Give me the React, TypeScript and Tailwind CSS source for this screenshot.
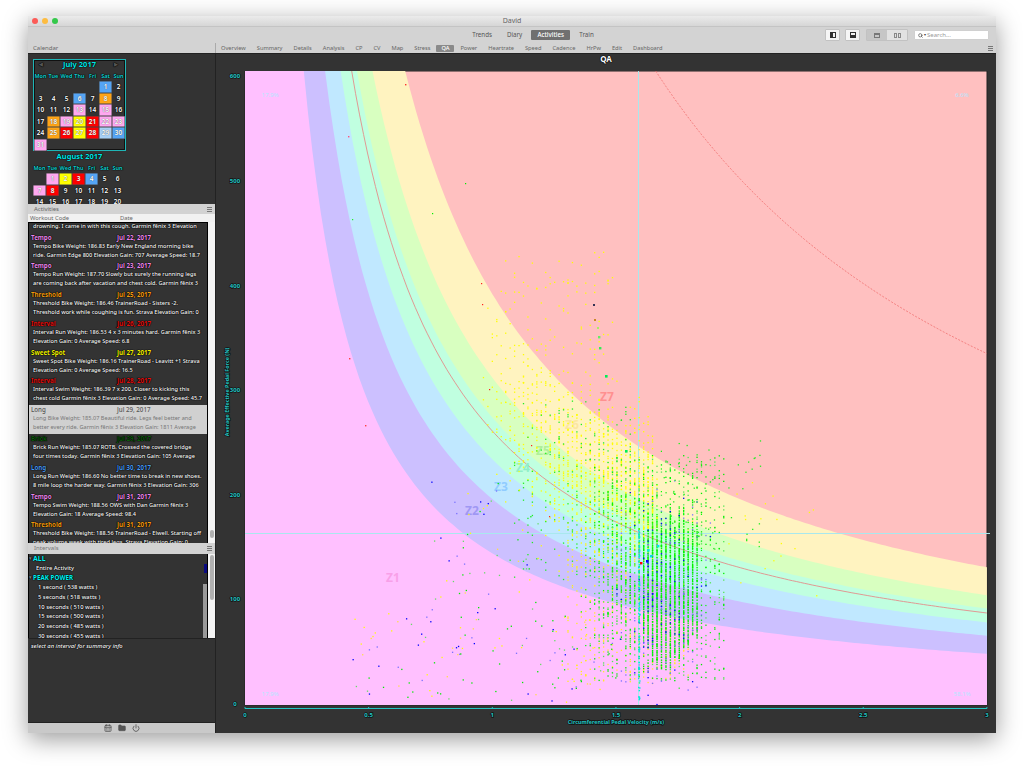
import { CalendarDays, Folder, Power, Search } from "lucide-react";

const halo = "[text-shadow:0_0_1px_#000,0_0_1px_#000,0_0_1px_#000]";
const softHalo = "[text-shadow:0_0_1px_#333]";

const tabs = ["Overview", "Summary", "Details", "Analysis", "CP", "CV", "Map", "Stress", "QA", "Power", "Heartrate", "Speed", "Cadence", "HrPw", "Edit", "Dashboard"];

const colors: Record<string, string> = {
  pink: "bg-[#ffa8f0]",
  blue: "bg-[#55a5f5]",
  sky: "bg-[#a8d0f5]",
  orange: "bg-[#ffa516]",
  yellow: "bg-[#ffff00]",
  red: "bg-[#ff0000]",
};

const july: Record<number, string> = {
  1: "blue", 6: "blue", 8: "orange", 13: "pink", 15: "pink", 18: "orange", 19: "pink", 20: "yellow", 21: "red",
  22: "pink", 23: "pink", 25: "orange", 26: "red", 27: "yellow", 28: "red", 29: "sky", 30: "blue", 31: "pink",
};
const august: Record<number, string> = { 1: "pink", 2: "yellow", 3: "red", 4: "blue", 7: "pink", 8: "red" };

const activities = [
  { t: "Tempo", d: "Jul 22, 2017", c: "text-[#e986e9]", a: "Tempo Bike Weight: 186.83 Early New England morning bike", b: "ride. Garmin Edge 800 Elevation Gain: 707 Average Speed: 18.7" },
  { t: "Tempo", d: "Jul 23, 2017", c: "text-[#e986e9]", a: "Tempo Run Weight: 187.70 Slowly but surely the running legs", b: "are coming back after vacation and chest cold. Garmin fēnix 3" },
  { t: "Threshold", d: "Jul 25, 2017", c: "text-[#f09a10]", a: "Threshold Bike Weight: 186.46 TrainerRoad - Sisters -2.", b: "Threshold work while coughing is fun. Strava Elevation Gain: 0" },
  { t: "Interval", d: "Jul 26, 2017", c: "text-[#e01010]", a: "Interval Run Weight: 186.53 4 x 3 minutes hard. Garmin fēnix 3", b: "Elevation Gain: 0 Average Speed: 6.8" },
  { t: "Sweet Spot", d: "Jul 27, 2017", c: "text-[#f0f000]", a: "Sweet Spot Bike Weight: 186.16 TrainerRoad - Leavitt +1 Strava", b: "Elevation Gain: 0 Average Speed: 16.5" },
  { t: "Interval", d: "Jul 28, 2017", c: "text-[#e01010]", a: "Interval Swim Weight: 186.39 7 x 200. Closer to kicking this", b: "chest cold Garmin fēnix 3 Elevation Gain: 0 Average Speed: 45.7" },
  { t: "Long", d: "Jul 29, 2017", c: "", a: "Long Bike Weight: 185.07 Beautiful ride. Legs feel better and", b: "better every ride. Garmin fēnix 3 Elevation Gain: 1811 Average", selected: true },
  { t: "Brick", d: "Jul 29, 2017", c: "text-[#0c5a0c]", a: "Brick Run Weight: 185.07 ROTB. Crossed the covered bridge", b: "four times today. Garmin fēnix 3 Elevation Gain: 105 Average" },
  { t: "Long", d: "Jul 30, 2017", c: "text-[#4a98ee]", a: "Long Run Weight: 186.60 No better time to break in new shoes.", b: "8 mile loop the harder way. Garmin fēnix 3 Elevation Gain: 306" },
  { t: "Tempo", d: "Jul 31, 2017", c: "text-[#e986e9]", a: "Tempo Swim Weight: 188.56 OWS with Dan Garmin fēnix 3", b: "Elevation Gain: 18 Average Speed: 98.4" },
  { t: "Threshold", d: "Jul 31, 2017", c: "text-[#f09a10]", a: "Threshold Bike Weight: 188.56 TrainerRoad - Elwell. Starting off", b: "peak volume week with tired legs. Strava Elevation Gain: 0" },
];

const peaks = ["1 second ( 538 watts )", "5 seconds ( 518 watts )", "10 seconds ( 510 watts )", "15 seconds ( 500 watts )", "20 seconds ( 485 watts )", "30 seconds ( 455 watts )"];

// plot geometry, in page pixels
const L = 245, R = 987, T = 71, B = 705;
const px = (v: number) => L + v * 247.3;
const py = (f: number) => 704 - f * 1.046;

function curve(p: number) {
  const pts: string[] = [];
  const v0 = p / ((704 - T) / 1.046);
  for (let i = 0; i <= 160; i++) {
    const v = v0 + ((3 - v0) * i) / 160;
    pts.push(`${px(v).toFixed(1)} ${py(p / v).toFixed(1)}`);
  }
  return pts;
}
const under = (p: number) => `M${L} ${B}L${L} ${T}L${curve(p).join("L")}L${R} ${B}Z`;

function makeDots() {
  let s = 20170731;
  const r = () => {
    s |= 0; s = (s + 0x6d2b79f5) | 0;
    let t = Math.imul(s ^ (s >>> 15), 1 | s);
    t = (t + Math.imul(t ^ (t >>> 7), 61 | t)) ^ t;
    return ((t ^ (t >>> 14)) >>> 0) / 4294967296;
  };
  const g = () => (r() + r() + r() + r() - 2) / 1.15;
  const dots: { x: number; y: number; w: number; c: string }[] = [];
  const col = (x: number) => 643 + Math.round((x - 643) / 4.45) * 4.45;
  const add = (x: number, y: number, c: string, w = 1.3) => {
    if (x > L && x < R && y > T && y < B) dots.push({ x, y, w, c });
  };
  // yellow cloud following the power curve, heavier toward the right
  for (let i = 0; i < 1150; i++) {
    const x = 480 + Math.sqrt(r()) * 175;
    const mid = 704 - (300 / ((x - L) / 247.3)) * 1.046;
    add(col(x), mid + g() * 80, "#ffff00");
  }
  for (let i = 0; i < 130; i++) add(col(495 + r() * 120), 250 + r() * 170, "#ffff00");
  for (let i = 0; i < 420; i++) add(col(565 + r() * 125), 520 + r() * 165, "#ffee20");
  // green cloud
  for (let i = 0; i < 1000; i++) add(col(650 + g() * 55), 570 + g() * 85, "#00ff00", 1.2);
  for (let i = 0; i < 800; i++) add(col(590 + r() * 135), 455 + r() * 225, r() > 0.5 ? "#00ee00" : "#55e855");
  for (let i = 0; i < 170; i++) add(col(510 + r() * 120), 400 + r() * 180, "#22ee22");
  // solid streaks: each pedalling column runs its own length
  for (let c = 0; c < 13; c++) {
    const x = 643 + c * 4.45;
    const top = 505 + r() * 25 + Math.abs(c - 6) * 3;
    const bot = 680 - Math.abs(c - 5) * 6 - r() * 18;
    for (let y = top; y < bot; y += 1 + r() * 2.2) add(x, y, "#00f000", 1.4);
  }
  // blue and purple columns
  for (let i = 0; i < 170; i++) add(col(660 + g() * 35), 590 + g() * 90, r() > 0.4 ? "#0000ff" : "#7a70ff");
  for (let i = 0; i < 70; i++) add(col(620 + r() * 90), 500 + r() * 190, "#7a70ff");
  for (let i = 0; i < 90; i++) add(638 + r() * 1.2, 525 + r() * 175, "#00e8d8", 1.4);
  // loose points away from the cloud
  const loose = ["#0000ff", "#7a70ff", "#00ee00", "#66dd66", "#ffff00", "#ffe040", "#00ee00", "#ffff00"];
  for (let i = 0; i < 130; i++) add(350 + r() * 270, 610 + r() * 92, loose[Math.floor(r() * 8)]);
  for (let i = 0; i < 55; i++) add(430 + r() * 110, 480 + r() * 130, loose[Math.floor(r() * 8)]);
  for (let i = 0; i < 60; i++) add(660 + r() * 100, 440 + r() * 110, "#22ee22");
  for (let i = 0; i < 18; i++) add(720 + r() * 100, 480 + r() * 130, "#ffff00");
  const fixed: [number, number, string, number][] = [
    [405, 84, "#ff3030", 1.4], [348, 136, "#ff5080", 1.4], [352, 219, "#22ee22", 1.2], [432, 213, "#00ee00", 1.2],
    [465, 183, "#00ee00", 1.2], [481, 283, "#ff2020", 1.2], [482, 304, "#ff2020", 1.2], [593, 304, "#333355", 2],
    [594, 319, "#cc8822", 2], [597, 327, "#aaee66", 2], [598, 336, "#66ee66", 2.4], [599, 347, "#33ee55", 2.4],
    [605, 375, "#00ee55", 2.6], [625, 450, "#00ee55", 2.6], [647, 549, "#00eedd", 2.6], [657, 545, "#00eedd", 2.4],
    [650, 555, "#00ddee", 2.4], [646, 560, "#0000ff", 2.6], [640, 562, "#ff0000", 2.4], [349, 358, "#ff4040", 1.4],
    [365, 425, "#ff4040", 1.4], [489, 389, "#ff2020", 1.2], [531, 445, "#ff2020", 1.2], [549, 516, "#ff2020", 1.2],
  ];
  fixed.forEach(([x, y, c, w]) => add(x, y, c, w));
  return dots;
}
const dots = makeDots();

function MenuIcon() {
  return (
    <div className="flex flex-col gap-[1px] w-[5px]">
      <div className="h-[1px] bg-[#777]" />
      <div className="h-[1px] bg-[#777]" />
      <div className="h-[1px] bg-[#777]" />
    </div>
  );
}

function Month({ title, blanks, days, marks, boxed }: { title: string; blanks: number; days: number; marks: Record<number, string>; boxed?: boolean }) {
  const heads = ["Mon", "Tue", "Wed", "Thu", "Fri", "Sat", "Sun"];
  const cells = [...Array(blanks).fill(0), ...Array.from({ length: days }, (_, i) => i + 1)];
  return (
    <div className={`w-[93px] ${boxed ? "h-[92px] border border-[#1fb5b5] bg-[#333] shadow-[inset_0_0_0_1px_#111]" : "h-[60px]"}`}>
      <div className={`relative h-[10px] flex items-center justify-center text-[7.5px] font-bold text-[#00e5e5] ${halo}`}>
        {boxed && <span className="absolute left-[5px] text-[5px] text-[#555]">◀</span>}
        {title}
        {boxed && <span className="absolute right-[7px] text-[5px] text-[#555]">▶</span>}
      </div>
      <div className="grid grid-cols-7 w-[91px] mt-[1px]">
        {heads.map((h) => (
          <div key={h} className={`h-[10px] flex items-center justify-center text-[5.5px] font-bold text-[#14c8c8] ${halo}`}>{h}</div>
        ))}
        {cells.map((d, i) => (
          <div
            key={i}
            className={`h-[11.6px] flex items-center justify-center text-[6.5px] font-semibold text-white ${d && marks[d] ? `${colors[marks[d]]} ${softHalo} shadow-[inset_0_0_0_0.5px_#444]` : halo}`}
          >
            {d || ""}
          </div>
        ))}
      </div>
    </div>
  );
}

function Sidebar() {
  return (
    <div className="w-[188px] flex flex-col border-r border-[#222]">
      {/* calendar */}
      <div className="h-[150px] bg-[#333] overflow-hidden pl-[5px] pt-[5px] flex flex-col">
        <Month title="July 2017" blanks={5} days={31} marks={july} boxed />
        <div className="mt-[1px]">
          <Month title="August 2017" blanks={1} days={20} marks={august} />
        </div>
      </div>

      {/* activities */}
      <div className="h-[10px] bg-[#d2d2d2] flex items-center justify-between pl-[6px] pr-[3px] text-[6px] text-[#666]">
        Activities
        <MenuIcon />
      </div>
      <div className="h-[8px] bg-[#f1f1f1] flex items-center text-[5.8px] text-[#666] pl-[2px]">
        <span className="w-[90px]">Workout Code</span>
        <span>Date</span>
      </div>
      <div className="h-[321px] flex">
        <div className="w-[180px] bg-[#333] border-x border-t border-black overflow-hidden">
          <div className={`h-[9.5px] pl-[4px] leading-[6px] text-[5.6px] font-medium text-white whitespace-nowrap ${halo}`}>
            drowning. I came in with this cough. Garmin fēnix 3 Elevation
          </div>
          {activities.map((a, i) => (
            <div key={i} className={`h-[28.8px] leading-[9px] whitespace-nowrap ${a.selected ? "bg-[#d0d0d0]" : ""}`}>
              <div className={`flex text-[6.2px] font-bold ${a.selected ? "font-medium text-[#555]" : `${a.c} ${halo}`}`}>
                <span className="w-[88px] pl-[2px]">{a.t}</span>
                <span>{a.d}</span>
              </div>
              <div className={`pl-[4px] text-[5.6px] ${a.selected ? "text-[#777]" : `font-medium text-white ${halo}`}`}>
                <div>{a.a}</div>
                <div>{a.b}</div>
              </div>
            </div>
          ))}
        </div>
        <div className="flex-1 bg-[#f4f4f4] pl-[2px]">
          <div className="mt-[308px] w-[4px] h-[8px] rounded-full bg-[#b0b0b0]" />
        </div>
      </div>

      {/* intervals */}
      <div className="h-[11px] bg-[#d2d2d2] flex items-center justify-between pl-[6px] pr-[3px] text-[6px] text-[#777]">
        Intervals
        <MenuIcon />
      </div>
      <div className="h-[84px] flex">
        <div className="w-[180px] bg-[#333] border-x border-black overflow-hidden relative leading-[9.7px] whitespace-nowrap">
          <div className={`flex items-center text-[7px] font-bold text-[#00f0f0] ${halo}`}>
            <span className="w-[4px] text-[5px] text-[#777]">▾</span>ALL
          </div>
          <div className={`text-[5.8px] font-medium text-white pl-[7px] ${halo}`}>Entire Activity</div>
          <div className={`flex items-center text-[6.3px] font-bold text-[#00f0f0] ${halo}`}>
            <span className="w-[4px] text-[5px] text-[#777]">▾</span>PEAK POWER
          </div>
          {peaks.map((p) => (
            <div key={p} className={`text-[5.8px] font-medium text-white pl-[9px] ${halo}`}>{p}</div>
          ))}
          <div className="absolute right-0 top-[10px] w-[3px] h-[9px] bg-[#0a0a80]" />
          <div className="absolute right-0 top-[30px] bottom-0 w-[4px] bg-[#999]" />
        </div>
        <div className="flex-1 bg-[#f4f4f4] pl-[2px] pt-[1px]">
          <div className="w-[4px] h-[45px] rounded-full bg-[#b0b0b0]" />
        </div>
      </div>
      <div className="h-[84px] bg-[#333] border-t border-[#222] pl-[3px] pt-[3px]">
        <div className={`text-[5.8px] italic font-medium text-white whitespace-nowrap ${halo}`}>select an interval for summary info</div>
      </div>
      <div className="h-[11px] bg-[#c9c9c9] border-t border-[#222] flex items-center justify-center gap-[6px] text-[#555] pl-[1px]">
        <CalendarDays size={8} strokeWidth={2.5} />
        <Folder size={8} fill="#555" />
        <Power size={8} strokeWidth={2.5} />
      </div>
    </div>
  );
}

function Chart() {
  const zones: [number, string][] = [[392, "#fff3c0"], [312, "#d8ffc0"], [274, "#c0ffe0"], [234, "#c0e8ff"], [196, "#ccc0ff"], [144, "#ffc0ff"]];
  const labels: [string, number, number, string][] = [
    ["Z1", 393, 582, "#f8a0e8"], ["Z2", 472, 515, "#a098f4"], ["Z3", 501, 491, "#90ccff"], ["Z4", 523, 472, "#90f0c8"],
    ["Z5", 543, 455, "#b0f098"], ["Z6", 572, 429, "#fbe6a0"], ["Z7", 607, 401, "#ff9090"],
  ];
  const corners: [string, number, number][] = [["17.9%", 270, 97], ["6.6%", 962, 97], ["17.9%", 270, 696], ["58.1%", 962, 696]];
  const axis = { fill: "#22c4c4", stroke: "#111", strokeWidth: 1.4, paintOrder: "stroke" as const, fontSize: 6, fontWeight: 700, textAnchor: "middle" as const };
  return (
    <svg viewBox="216 71 780 662" className="block w-[780px] h-[662px]" fontFamily="'Noto Sans', sans-serif">
      <rect x={L} y={T} width={R - L} height={B - T} fill="#ffc0c0" stroke="#222" strokeWidth={1} />
      {zones.map(([p, c]) => <path key={p} d={under(p)} fill={c} />)}
      <path d={`M${curve(261).join("L")}`} fill="none" stroke="#e09a94" strokeWidth={1} />
      <path d={`M${curve(1005).join("L")}`} fill="none" stroke="#f07070" strokeWidth={0.8} strokeDasharray="2 1.5" />
      {labels.map(([t, x, y, c]) => (
        <text key={t} x={x} y={y} fill={c} fontSize={12} fontWeight={700} textAnchor="middle">{t}</text>
      ))}
      {corners.map(([t, x, y], i) => (
        <text key={i} x={x} y={y} fill="#b4e6ff" fontSize={6} textAnchor="middle">{t}</text>
      ))}
      <line x1={638.5} y1={T} x2={638.5} y2={B} stroke="#a8e8ee" strokeWidth={1} />
      <line x1={L} y1={533.5} x2={R + 3} y2={533.5} stroke="#a8e8ee" strokeWidth={1} />
      {dots.map((d, i) => <rect key={i} x={d.x} y={d.y} width={d.w} height={d.w} fill={d.c} />)}

      <line x1={L} y1={708.5} x2={R} y2={708.5} stroke="#22c4c4" strokeWidth={1} />
      {[0, 0.5, 1, 1.5, 2, 2.5, 3].map((v) => (
        <g key={v}>
          <line x1={px(v)} y1={707} x2={px(v)} y2={708.5} stroke="#22c4c4" strokeWidth={1} />
          <text x={px(v)} y={717} {...axis}>{v}</text>
        </g>
      ))}
      {[0, 100, 200, 300, 400, 500, 600].map((f) => (
        <text key={f} x={235} y={py(f) + 2} {...axis}>{f}</text>
      ))}
      <text x={616} y={724} {...axis} fontSize={5.4}>Circumferential Pedal Velocity (m/s)</text>
      <text transform="translate(229 392) rotate(-90)" {...axis} fontSize={5.4}>Average Effective Pedal Force (N)</text>
    </svg>
  );
}

export default function App() {
  return (
    <div className="h-[773px] w-[1024px] bg-white overflow-hidden pt-[16px] pl-[28px] font-['Noto_Sans',sans-serif]">
      <div className="w-[968px] h-[717px] flex flex-col rounded-t-[3px] shadow-[0_6px_24px_rgba(0,0,0,0.4)]">
        {/* title bar */}
        <div className="relative h-[11px] bg-gradient-to-b from-[#ebebeb] to-[#d6d6d6] border-b border-[#c4c4c4] flex items-center justify-center text-[7px] text-[#666]">
          <div className="absolute left-[4px] flex gap-[4.5px]">
            <div className="w-[5.5px] h-[5.5px] rounded-full bg-[#fc5b57]" />
            <div className="w-[5.5px] h-[5.5px] rounded-full bg-[#fdbc40]" />
            <div className="w-[5.5px] h-[5.5px] rounded-full bg-[#34c84a]" />
          </div>
          David
        </div>

        {/* toolbar */}
        <div className="relative h-[16px] bg-[#d3d3d3] flex items-center justify-center text-[6.2px] text-[#555]">
          <div className="flex items-center gap-[15px] ml-[42px]">
            <span>Trends</span>
            <span>Diary</span>
            <span className="w-[39px] h-[10px] flex items-center justify-center rounded-[1px] bg-[#707070] text-white font-medium -mx-[6px]">Activities</span>
            <span>Train</span>
          </div>
          <div className="absolute left-[797px] flex items-center h-[12px] gap-[5px]">
            <div className="w-[15px] h-[12px] bg-[#f6f6f6] border border-[#c2c2c2] rounded-[1px] flex items-center justify-center">
              <div className="w-[6px] h-[6px] border border-[#333] border-l-[3px]" />
            </div>
            <div className="w-[15px] h-[12px] bg-[#f6f6f6] border border-[#c2c2c2] rounded-[1px] flex items-center justify-center">
              <div className="w-[6px] h-[6px] border border-[#333] border-b-[3px]" />
            </div>
            <div className="flex h-[12px] rounded-[1px] border border-[#c2c2c2] ml-[1px]">
              <div className="w-[20px] bg-[#c6c6c6] flex items-center justify-center">
                <div className="w-[6px] h-[5px] border border-[#777] border-t-2" />
              </div>
              <div className="w-[20px] bg-[#e2e2e2] flex items-center justify-center gap-[1px]">
                <div className="w-[3px] h-[5px] border border-[#888]" />
                <div className="w-[3px] h-[5px] border border-[#888]" />
              </div>
            </div>
            <div className="w-[75px] h-[10px] ml-[1px] bg-white border border-[#d0d0d0] rounded-[1px] flex items-center pl-[3px] gap-[1px] text-[6px] text-[#999]">
              <Search size={5} strokeWidth={3} className="text-[#444]" />
              <span className="text-[#444] text-[4px]">▾</span>
              Search...
            </div>
          </div>
        </div>

        {/* tab row */}
        <div className="h-[11px] bg-[#d3d3d3] border-b border-[#222] flex items-center text-[5.7px] text-[#666]">
          <div className="w-[188px] pl-[5px] border-r border-[#aaa] h-full flex items-center text-[6px]">Calendar</div>
          <div className="flex-1 flex items-center gap-[11px] pl-[5px] h-full">
            {tabs.map((t) =>
              t === "QA" ? (
                <span key={t} className="w-[18px] h-[7px] -mx-[5px] flex items-center justify-center rounded-[1px] bg-[#8a8a8a] text-white font-medium">{t}</span>
              ) : (
                <span key={t}>{t}</span>
              )
            )}
          </div>
          <div className="pr-[3px]"><MenuIcon /></div>
        </div>

        {/* body */}
        <div className="h-[679px] flex">
          <Sidebar />
          <div className="flex-1 bg-[#333] flex flex-col">
            <div className={`h-[17px] flex items-center justify-center text-[8px] font-bold text-white pb-[7px] ${halo}`}>QA</div>
            <Chart />
          </div>
        </div>
      </div>
    </div>
  );
}
